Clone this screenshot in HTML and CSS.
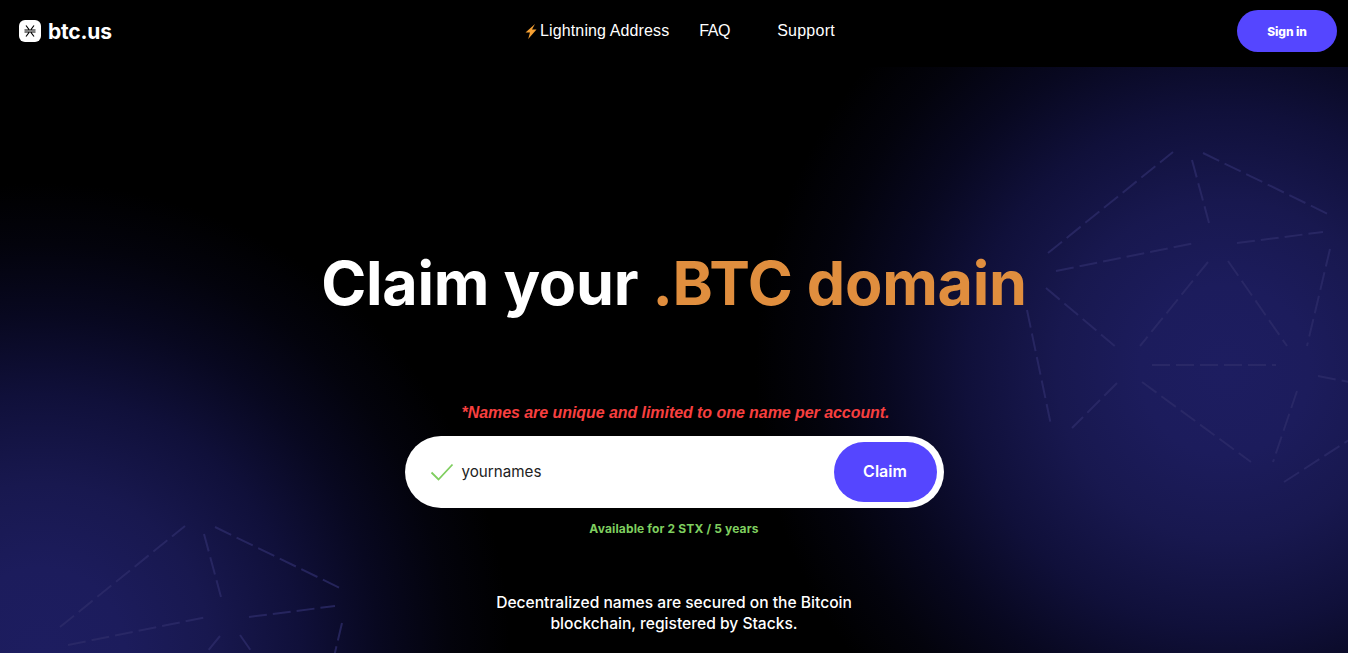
FILE: index.html
```html
<!DOCTYPE html>
<html lang="en">
<head>
<meta charset="utf-8">
<title>btc.us</title>
<link rel="stylesheet" href="styles.css">
</head>
<body>
<svg class="defs" width="0" height="0" aria-hidden="true">
  <symbol id="mesh" viewBox="0 0 340 340" overflow="visible">
    <path d="M8 111L133 10M152 18L169 81M163 11L290 73M16 129L155 101M197 101L283 90M290 107L267 204M188 119L247 204M168 120L100 204M6 146L77 206M-13 168L11 283M77 241L32 286M112 223L236 223M102 240L211 320M257 249L233 320M278 234L340 246M244 340L340 278"/>
  </symbol>
</svg>
<header class="topbar">
  <a class="brand" href="#">
    <svg class="brand-mark" viewBox="0 0 22 22" aria-hidden="true">
      <rect width="22" height="22" rx="6" fill="#fff"/>
      <path d="M7 5.5L10 9.5M15 5.5L12 9.5M5.5 10H16.5M5.5 12H16.5M7 16.5L10 12.5M15 16.5L12 12.5" stroke="#000" stroke-width="1.2" fill="none"/>
    </svg>
    <span>btc.us</span>
  </a>
  <nav class="nav">
    <a class="nav-link" href="#"><svg class="bolt" viewBox="0 0 11 15" aria-hidden="true"><path d="M9.5 0L0 8.5H4.5L2.7 15L11 5.5H6.5Z" fill="#f5a033"/></svg>Lightning Address</a>
    <a class="nav-link nav-faq" href="#">FAQ</a>
    <a class="nav-link nav-support" href="#">Support</a>
  </nav>
  <a class="signin" href="#">Sign in</a>
</header>
<main class="hero">
  <svg class="mesh mesh-right" aria-hidden="true"><use href="#mesh" width="340" height="340"/></svg>
  <svg class="mesh mesh-left" aria-hidden="true"><use href="#mesh" width="340" height="340"/></svg>
  <h1 class="title">Claim your <span class="accent">.BTC domain</span></h1>
  <p class="notice">*Names are unique and limited to one name per account.</p>
  <form class="claim">
    <svg class="check" viewBox="0 0 24 18" aria-hidden="true"><path d="M1.5 9.5L8.5 16.5L22.5 1.5" fill="none" stroke="#7fce5f" stroke-width="1.8"/></svg>
    <span class="claim-value">yournames</span>
    <button class="claim-btn" type="button">Claim</button>
  </form>
  <p class="avail">Available for 2 STX / 5 years</p>
  <p class="blurb">Decentralized names are secured on the Bitcoin<br>blockchain, registered by Stacks.</p>
</main>
</body>
</html>
```
FILE: styles.css
```css
* { box-sizing: border-box; }
html, body { margin: 0; height: 100%; overflow: hidden; background: #000; }
body { font-family: Inter, "Liberation Sans", sans-serif; color: #fff; display: flex; flex-direction: column; }
a { color: inherit; text-decoration: none; }
.defs { position: absolute; }

.topbar { height: 67px; flex: none; background: #000; display: grid; grid-template-columns: 1fr auto 1fr; align-items: center; padding: 0 11px 5px 19px; }
.brand { display: flex; align-items: center; gap: 7px; font-size: 21px; font-weight: 700; letter-spacing: -0.2px; }
.brand-mark { width: 22px; height: 22px; }
.nav { display: flex; align-items: center; gap: 30px; padding-left: 4px; font-size: 16px; letter-spacing: .12px; font-family: "Liberation Sans", sans-serif; }
.nav-link { display: flex; align-items: center; gap: 3px; }
.nav-faq { margin-right: 17px; letter-spacing: -.4px; }
.nav-support { letter-spacing: .25px; }
.bolt { flex: none; width: 12px; height: 15px; margin-top: 1px; }
.signin { justify-self: end; width: 100px; height: 42px; border-radius: 21px; background: #5546ff; display: flex; align-items: center; justify-content: center; font-size: 12px; font-weight: 800; letter-spacing: -.1px; }

.hero { position: relative; flex: 1; overflow: hidden; display: flex; flex-direction: column; align-items: center; padding-top: 176px;
  background:
    radial-gradient(circle 470px at 1225px 303px, #1d1d60 0%, #1c1c5c 18%, #18184f 36%, #10103a 55%, #080820 72%, #03030c 87%, rgba(0,0,0,0) 100%),
    radial-gradient(circle 470px at 40px 586px, #1d1d60 0%, #1c1c5c 18%, #18184f 36%, #10103a 55%, #080820 72%, #03030c 87%, rgba(0,0,0,0) 100%),
    #000;
}
.mesh { position: absolute; width: 400px; height: 400px; overflow: visible; fill: none; stroke: #2d2c6a; stroke-width: 2; stroke-dasharray: 18 6; opacity: .75; }
.mesh-right { left: 1040px; top: 75px; }
.mesh-left { left: 52px; top: 449px; }

.title { position: relative; margin: 0; font-size: 61px; line-height: 80px; font-weight: 700; letter-spacing: -.25px; white-space: nowrap; }
.accent { color: #e08e3e; }
.notice { position: relative; margin: 80px 0 0; padding-left: 3px; font-size: 16px; line-height: 20px; font-weight: 700; font-style: italic; letter-spacing: -.06px; color: #f73f3f; font-family: "Liberation Sans", sans-serif; }
.claim { position: relative; margin-top: 13px; width: 539px; height: 72px; border-radius: 36px; background: #fff; display: flex; align-items: center; padding: 0 7px 0 25px; }
.check { width: 24px; height: 18px; }
.claim-value { margin-left: 8px; margin-bottom: 1px; flex: 1; color: #222; font-size: 15.2px; }
.claim-btn { width: 103px; height: 60px; border: 0; padding: 0 0 2px; border-radius: 30px; background: #5546ff; color: #fff; font: 600 16px Inter, sans-serif; }
.avail { position: relative; margin: 13px 0 0; font-size: 12px; line-height: 15px; font-weight: 700; letter-spacing: .15px; color: #7fce5f; }
.blurb { position: relative; margin: 56px 0 0; font-size: 15.6px; line-height: 21px; font-weight: 500; text-align: center; }
```
